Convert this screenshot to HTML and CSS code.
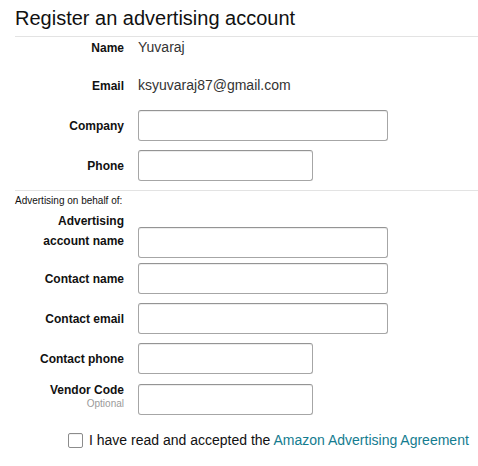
FILE: index.html
```html
<!DOCTYPE html>
<html lang="en">
<head>
<meta charset="utf-8">
<title>Register an advertising account</title>
<link rel="stylesheet" href="styles.css">
</head>
<body>
<div class="page">
  <h1 class="title">Register an advertising account</h1>

  <div class="info-row first">
    <span class="label">Name</span>
    <span class="value">Yuvaraj</span>
  </div>
  <div class="info-row email">
    <span class="label">Email</span>
    <span class="value">ksyuvaraj87@gmail.com</span>
  </div>

  <div class="field-row company">
    <label class="label" for="company">Company</label>
    <input class="input" id="company" type="text">
  </div>
  <div class="field-row gap9">
    <label class="label" for="phone">Phone</label>
    <input class="input short" id="phone" type="text">
  </div>

  <div class="divider"></div>
  <div class="behalf">Advertising on behalf of:</div>

  <div class="field-row account">
    <label class="label two-line" for="acct">Advertising<br>account name</label>
    <input class="input" id="acct" type="text">
  </div>
  <div class="field-row gap5">
    <label class="label" for="cname">Contact name</label>
    <input class="input" id="cname" type="text">
  </div>
  <div class="field-row gap9">
    <label class="label" for="cemail">Contact email</label>
    <input class="input" id="cemail" type="text">
  </div>
  <div class="field-row gap9">
    <label class="label" for="cphone">Contact phone</label>
    <input class="input short" id="cphone" type="text">
  </div>
  <div class="field-row gap10">
    <label class="label stacked" for="vendor">Vendor Code<span class="optional">Optional</span></label>
    <input class="input short" id="vendor" type="text">
  </div>

  <div class="agree-row">
    <span class="checkbox"></span>
    <span class="agree-text">I have read and accepted the <a class="link" href="#">Amazon Advertising Agreement</a></span>
  </div>
</div>
</body>
</html>
```

FILE: styles.css
```css
html, body {
  margin: 0;
  padding: 0;
  background: #ffffff;
}

body {
  font-family: "Liberation Sans", Arial, sans-serif;
  color: #111111;
}

.page {
  padding: 6px 0 0 15px;
}

.title {
  margin: 0;
  font-size: 20px;
  line-height: 24px;
  font-weight: 400;
  color: #111111;
  padding-bottom: 6px;
  border-bottom: 1px solid #e3e3e3;
}

.info-row {
  display: grid;
  grid-template-columns: 109px auto;
  column-gap: 14px;
  align-items: baseline;
  line-height: 20px;
}

.info-row.email {
  margin-top: 17px;
}

.label {
  text-align: right;
  font-size: 12px;
  font-weight: 700;
  color: #111111;
}

.value {
  font-size: 14px;
  color: #333333;
}

.field-row {
  display: grid;
  grid-template-columns: 109px auto;
  column-gap: 14px;
  align-items: center;
}

.field-row .label {
  line-height: 20px;
}

.field-row.company { margin-top: 14px; }
.field-row.gap5 { margin-top: 5px; }
.field-row.gap9 { margin-top: 9px; }
.field-row.gap10 { margin-top: 10px; }

.input {
  box-sizing: border-box;
  width: 250px;
  height: 31px;
  margin: 0;
  padding: 3px 7px;
  border: 1px solid #a6a6a6;
  border-top-color: #949494;
  border-radius: 3px;
  background: #ffffff;
  box-shadow: 0 1px 0 rgba(255, 255, 255, 0.5), inset 0 1px 0 rgba(0, 0, 0, 0.07);
  font-family: "Liberation Sans", Arial, sans-serif;
  font-size: 13px;
  outline: none;
}

.input.short {
  width: 175px;
}

.divider {
  margin-top: 9px;
  border-top: 1px solid #e3e3e3;
}

.behalf {
  margin-top: 4px;
  font-size: 10px;
  line-height: 12px;
  color: #111111;
}

.field-row.account {
  margin-top: 4px;
  align-items: end;
}

.label.two-line {
  margin-bottom: 7px;
}

.label.stacked {
  line-height: 14px;
  display: flex;
  flex-direction: column;
  align-items: flex-end;
  margin-top: -5px;
}

.optional {
  font-size: 10px;
  font-weight: 400;
  color: #9a9a9a;
  line-height: 14px;
}

.agree-row {
  display: flex;
  align-items: center;
  gap: 6px;
  margin-top: 17px;
  padding-left: 53px;
  font-size: 14px;
  line-height: 16px;
}

.checkbox {
  box-sizing: border-box;
  width: 15px;
  height: 15px;
  border: 1px solid #8c8c8c;
  border-radius: 2px;
  background: #ffffff;
  box-shadow: inset 0 1px 0 rgba(0, 0, 0, 0.05);
}

.agree-text {
  color: #111111;
}

.link {
  color: #147c8f;
  text-decoration: none;
}
```
